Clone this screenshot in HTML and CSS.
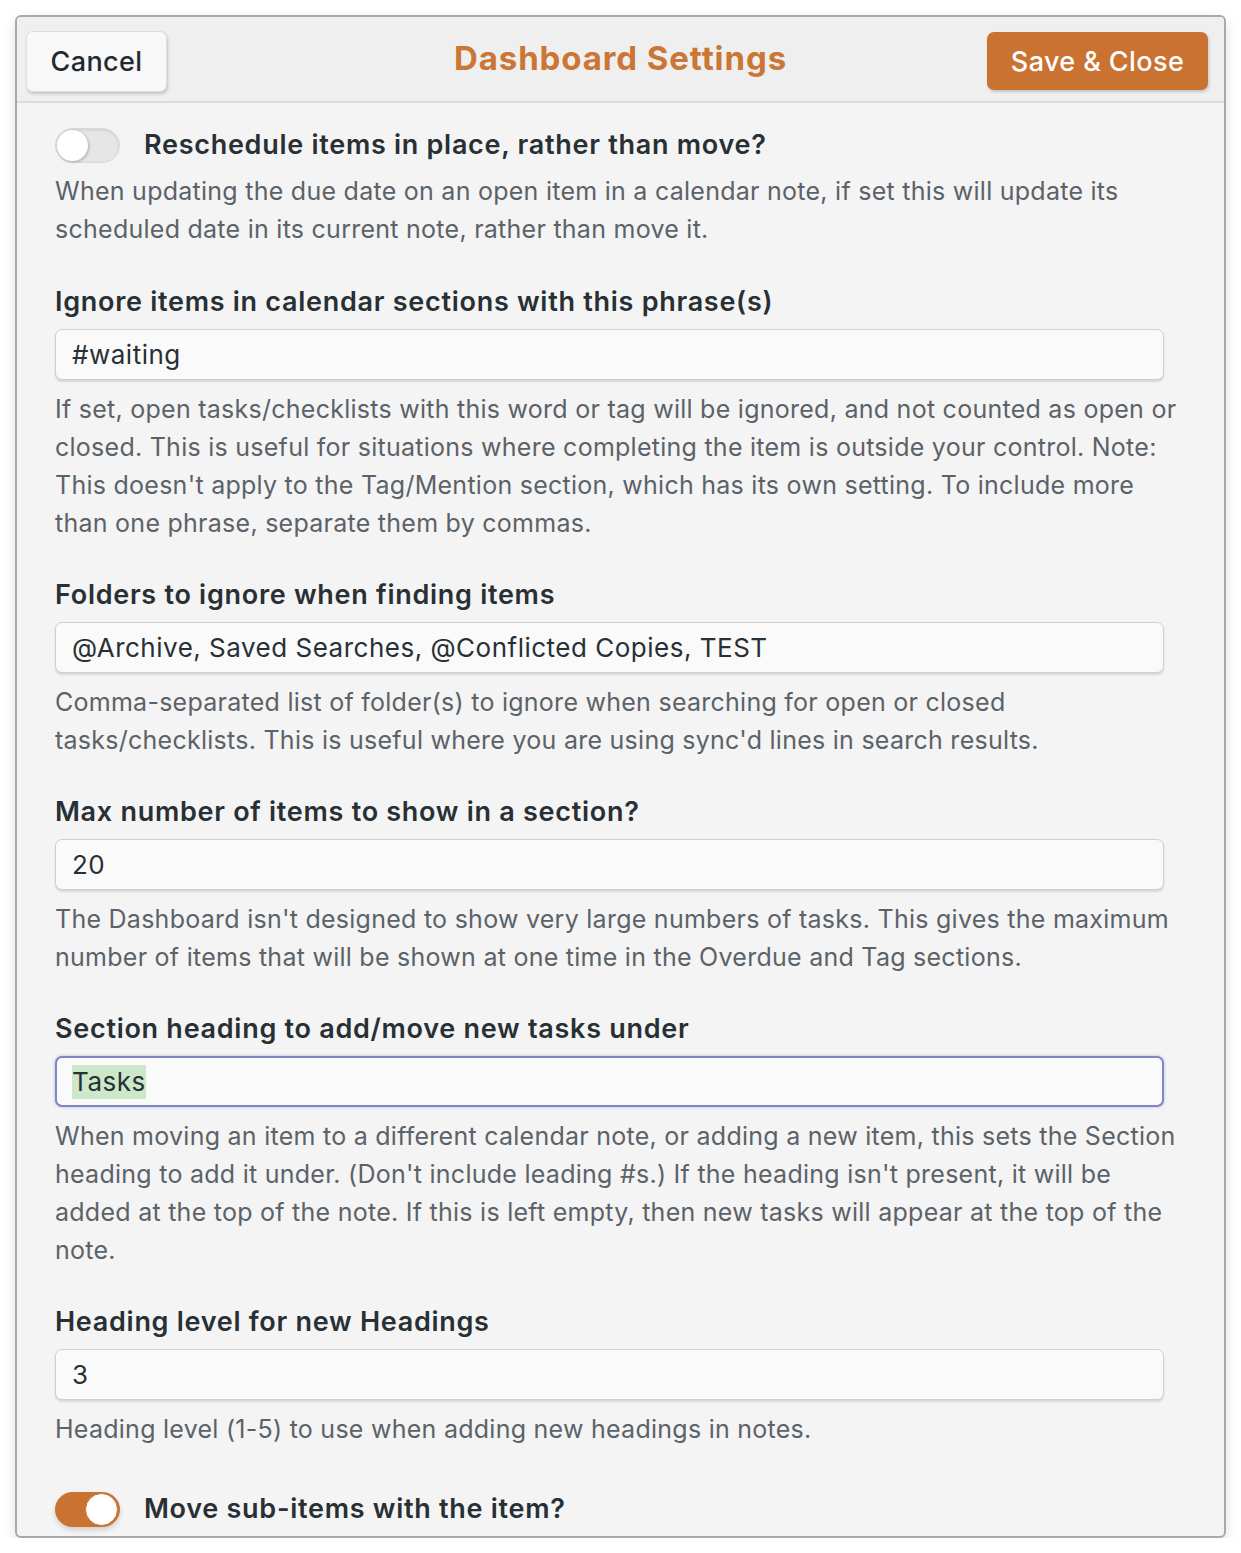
FILE: index.html
```html
<!DOCTYPE html>
<html>
<head>
<meta charset="utf-8">
<link rel="stylesheet" href="styles.css">
</head>
<body>
<div class="dialog">
  <div class="header">
    <button class="btn cancel">Cancel</button>
    <div class="title">Dashboard Settings</div>
    <button class="btn save">Save &amp; Close</button>
  </div>
  <div class="body">
    <div class="item first">
      <div class="switch-row">
        <span class="switch"><span class="knob"></span></span>
        <span class="label">Reschedule items in place, rather than move?</span>
      </div>
      <div class="desc">When updating the due date on an open item in a calendar note, if set this will update its scheduled date in its current note, rather than move it.</div>
    </div>
    <div class="item">
      <div class="label">Ignore items in calendar sections with this phrase(s)</div>
      <div class="input">#waiting</div>
      <div class="desc">If set, open tasks/checklists with this word or tag will be ignored, and not counted as open or closed. This is useful for situations where completing the item is outside your control. Note: This doesn't apply to the Tag/Mention section, which has its own setting. To include more than one phrase, separate them by commas.</div>
    </div>
    <div class="item">
      <div class="label">Folders to ignore when finding items</div>
      <div class="input">@Archive, Saved Searches, @Conflicted Copies, TEST</div>
      <div class="desc">Comma-separated list of folder(s) to ignore when searching for open or closed tasks/checklists. This is useful where you are using sync'd lines in search results.</div>
    </div>
    <div class="item">
      <div class="label">Max number of items to show in a section?</div>
      <div class="input">20</div>
      <div class="desc">The Dashboard isn't designed to show very large numbers of tasks. This gives the maximum number of items that will be shown at one time in the Overdue and Tag sections.</div>
    </div>
    <div class="item">
      <div class="label">Section heading to add/move new tasks under</div>
      <div class="input focused"><span class="sel">Tasks</span></div>
      <div class="desc">When moving an item to a different calendar note, or adding a new item, this sets the Section heading to add it under. (Don't include leading #s.) If the heading isn't present, it will be added at the top of the note. If this is left empty, then new tasks will appear at the top of the note.</div>
    </div>
    <div class="item">
      <div class="label">Heading level for new Headings</div>
      <div class="input">3</div>
      <div class="desc">Heading level (1-5) to use when adding new headings in notes.</div>
    </div>
    <div class="item last">
      <div class="switch-row">
        <span class="switch on"><span class="knob"></span></span>
        <span class="label">Move sub-items with the item?</span>
      </div>
    </div>
  </div>
</div>
</body>
</html>
```
FILE: styles.css
```css
html, body {
  margin: 0;
  padding: 0;
  background: #ffffff;
}
body {
  font-family: Inter, "Noto Sans", "Liberation Sans", sans-serif;
  padding: 15px 14px 0 15px;
}
.dialog {
  width: 1211px;
  height: 1523px;
  box-sizing: border-box;
  border: 2px solid #a9a9a9;
  border-radius: 6px;
  background: #f4f4f4;
  overflow: hidden;
  box-shadow: 0 6px 14px rgba(0,0,0,0.12);
  display: flex;
  flex-direction: column;
}
.header {
  height: 86px;
  flex: none;
  box-sizing: border-box;
  background: #efefef;
  border-bottom: 2px solid #dcdcdc;
  display: flex;
  align-items: center;
  justify-content: space-between;
  padding: 0 16px 2px 9px;
  position: relative;
}
.btn {
  font-family: inherit;
  font-size: 27px;
  font-weight: 500;
  border-radius: 7px;
  cursor: pointer;
  letter-spacing: 0.4px;
}
.cancel {
  width: 141px;
  height: 61px;
  background: #f8f8f8;
  color: #222a30;
  border: 1px solid #dedede;
  box-shadow: 1px 2px 3px rgba(0,0,0,0.18);
  margin-top: 6px;
}
.save {
  width: 221px;
  height: 58px;
  background: #c97232;
  color: #ffffff;
  border: none;
  box-shadow: 1px 2px 3px rgba(0,0,0,0.18);
  margin-top: 6px;
}
.title {
  position: absolute;
  left: 0;
  right: 0;
  top: 21px;
  text-align: center;
  pointer-events: none;
  font-size: 33px;
  font-weight: 700;
  color: #cb7634;
  letter-spacing: 0.9px;
}
.body {
  padding: 23px 36px 0 38px;
  flex: 1;
}
.item {
  margin-bottom: 32px;
}
.item.first {
  margin-bottom: 33px;
}
.item.last {
  margin-top: 42px;
}
.label {
  font-size: 27px;
  font-weight: 600;
  color: #283035;
  line-height: 38px;
  letter-spacing: 0.72px;
  padding-top: 2px;
}
.switch-row {
  display: flex;
  align-items: center;
  gap: 24px;
}
.switch-row .label {
  padding-top: 0;
}
.switch {
  width: 65px;
  height: 35px;
  box-sizing: border-box;
  border-radius: 18px;
  background: #e6e6e6;
  border: 1px solid #dadada;
  box-shadow: inset 0 1px 3px rgba(0,0,0,0.12);
  position: relative;
  flex: none;
  display: flex;
  align-items: center;
  padding: 1px;
}
.switch .knob {
  width: 31px;
  height: 31px;
  border-radius: 50%;
  background: #ffffff;
  box-shadow: 1px 1px 3px rgba(0,0,0,0.25);
}
.switch.on {
  background: #c97232;
  border-color: #c97232;
  justify-content: flex-end;
  box-shadow: 0 3px 5px rgba(0,0,0,0.15);
}
.switch.on .knob {
  box-shadow: none;
  border: 1px solid #c97232;
  box-sizing: border-box;
  width: 33px;
  height: 33px;
}
.input {
  margin-top: 8px;
  width: 1109px;
  height: 51px;
  box-sizing: border-box;
  background: #fafafa;
  border: 1px solid #cfcfcf;
  border-radius: 7px;
  box-shadow: 0 2px 2px rgba(0,0,0,0.12);
  padding: 0 16px;
  display: flex;
  align-items: center;
  font-size: 26px;
  letter-spacing: 0.5px;
  color: #283035;
}
.input.focused {
  border: 2px solid #8085c6;
  padding: 0 15px;
  box-shadow: 0 0 3px rgba(110,115,200,0.5);
}
.sel {
  background: #cde8c8;
  line-height: 34px;
}
.desc {
  margin-top: 10px;
  font-size: 25px;
  line-height: 38px;
  color: #5b6268;
  letter-spacing: 0.26px;
}
.switch-row + .desc {
  margin-top: 8px;
}
```
